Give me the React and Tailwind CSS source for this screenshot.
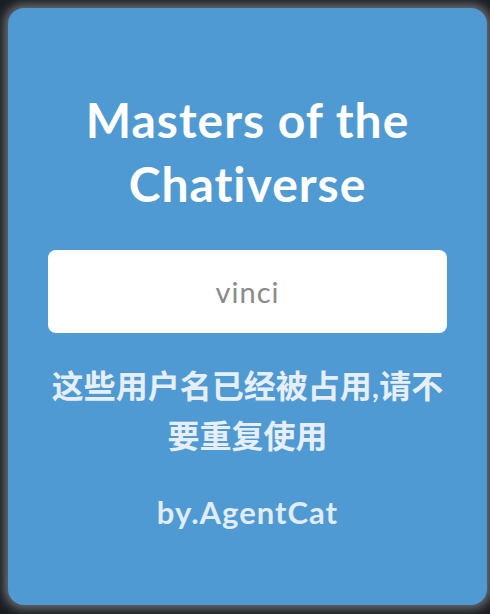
import React from 'react'

function App() {
    return (
        <div className="w-[490px] h-[614px] bg-[#1a1d22] p-2 overflow-hidden [font-variant-ligatures:none]" style={{ fontFamily: 'Lato, "Noto Sans CJK SC", sans-serif' }}>
            <div className="w-[479px] h-[597px] rounded-2xl bg-[#4f9ad2] shadow-[0_0_10px_4px_rgba(140,142,148,0.7)] flex flex-col items-center pt-[80px]">
                <h1 className="text-[48px] leading-[64px] font-bold tracking-[1px] text-white text-center">
                    Masters of the<br />Chativerse
                </h1>

                <div className="mt-[34px] w-[399px] h-[83px] rounded-lg bg-white flex items-center justify-center">
                    <span className="text-[29px] tracking-[1px] text-[#8a8a8a]">vinci</span>
                </div>

                <p className="mt-[28px] w-[400px] text-[32px] leading-[50px] font-semibold text-[#e6eff8] text-center">
                    这些用户名已经被占用,请不要重复使用
                </p>

                <p className="mt-[31px] text-[31px] leading-[40px] font-bold tracking-[1px] text-[#e0ecf7]">
                    by.AgentCat
                </p>
            </div>
        </div>
    )
}

export default App
